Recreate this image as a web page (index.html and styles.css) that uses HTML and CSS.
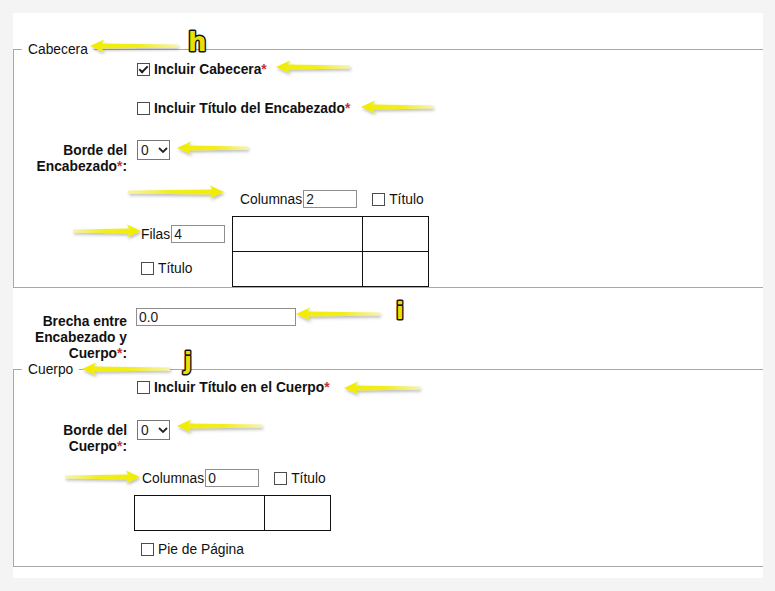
FILE: index.html
```html
<!DOCTYPE html>
<html lang="es">
<head>
    <meta charset="UTF-8">
    <meta name="viewport" content="width=device-width, initial-scale=1.0">
    <title>Diseño de Tabla - Cabecera y Cuerpo</title>
    <link rel="stylesheet" href="styles.css">
</head>
<body>
    <div class="panel">
        <!-- Cabecera -->
        <fieldset class="group">
            <legend>Cabecera</legend>

            <div class="row row-check head-include">
                <span class="field-label"></span>
                <label class="check strong"><input type="checkbox" checked><span>Incluir Cabecera<span class="req">*</span></span></label>
            </div>

            <div class="row row-check head-title">
                <span class="field-label"></span>
                <label class="check strong"><input type="checkbox"><span>Incluir Título del Encabezado<span class="req">*</span></span></label>
            </div>

            <div class="row row-select head-border">
                <span class="field-label">Borde del Encabezado<span class="req">*</span>:</span>
                <span class="select-box">
                    <select><option>0</option><option>1</option><option>2</option></select>
                    <svg viewBox="0 0 10 6"><path d="M1 1 L5 5 L9 1" fill="none" stroke="#222" stroke-width="1.8"/></svg>
                </span>
            </div>

            <div class="layout-head">
                <span></span>
                <div class="cols-line head-cols">
                    <span>Columnas</span><input class="num-input" type="text" value="2">
                    <label class="check title-check"><input type="checkbox"><span>Título</span></label>
                </div>

                <div class="rows-stack">
                    <div class="rows-line"><span>Filas</span><input class="num-input" type="text" value="4"></div>
                    <label class="check rows-title"><input type="checkbox"><span>Título</span></label>
                </div>
                <div class="preview preview-head">
                    <span></span><span></span>
                    <span></span><span></span>
                </div>
            </div>
        </fieldset>

        <div class="row gap-row">
            <span class="field-label">Brecha entre Encabezado y Cuerpo<span class="req">*</span>:</span>
            <input class="gap-input" type="text" value="0.0">
        </div>

        <!-- Cuerpo -->
        <fieldset class="group group-body">
            <legend>Cuerpo</legend>

            <div class="row row-check body-title">
                <span class="field-label"></span>
                <label class="check strong"><input type="checkbox"><span>Incluir Título en el Cuerpo<span class="req">*</span></span></label>
            </div>

            <div class="row row-select body-border">
                <span class="field-label">Borde del Cuerpo<span class="req">*</span>:</span>
                <span class="select-box">
                    <select><option>0</option><option>1</option><option>2</option></select>
                    <svg viewBox="0 0 10 6"><path d="M1 1 L5 5 L9 1" fill="none" stroke="#222" stroke-width="1.8"/></svg>
                </span>
            </div>

            <div class="cols-line body-cols">
                <span>Columnas</span><input class="num-input" type="text" value="0">
                <label class="check title-check"><input type="checkbox"><span>Título</span></label>
            </div>

            <div class="preview preview-body">
                <span></span><span></span>
            </div>

            <label class="check footer-check"><input type="checkbox"><span>Pie de Página</span></label>
        </fieldset>
    </div>

    <!-- flechas y letras de referencia -->
    <svg class="marks" viewBox="0 0 775 591" width="775" height="591">
        <defs>
            <linearGradient id="fade-left" x1="0" y1="0" x2="1" y2="0">
                <stop offset="0" stop-color="#f1ec00"/>
                <stop offset="0.55" stop-color="#f2ee1c"/>
                <stop offset="1" stop-color="#f6f4a8"/>
            </linearGradient>
            <linearGradient id="fade-right" x1="1" y1="0" x2="0" y2="0">
                <stop offset="0" stop-color="#f1ec00"/>
                <stop offset="0.55" stop-color="#f2ee1c"/>
                <stop offset="1" stop-color="#f6f4a8"/>
            </linearGradient>
            <filter id="soft" x="-10%" y="-60%" width="130%" height="250%">
                <feDropShadow dx="1" dy="2" stdDeviation="1.4" flood-color="#555" flood-opacity="0.4"/>
            </filter>
        </defs>
        <g class="arrows-left" fill="url(#fade-left)" filter="url(#soft)">
            <path d="M90 46 l14 -6.5 l-2 4 l76 1 l0 3 l-76 1 l2 4 z"/>
            <path d="M276 67 l14 -6.5 l-2 4 l62 1 l0 3 l-62 1 l2 4 z"/>
            <path d="M361 107 l14 -6.5 l-2 4 l60 1 l0 3 l-60 1 l2 4 z"/>
            <path d="M177 148 l14 -6.5 l-2 4 l59 1 l0 3 l-59 1 l2 4 z"/>
            <path d="M296 314 l14 -6.5 l-2 4 l72 1 l0 3 l-72 1 l2 4 z"/>
            <path d="M82 369 l14 -6.5 l-2 4 l76 1 l0 3 l-76 1 l2 4 z"/>
            <path d="M344 388 l14 -6.5 l-2 4 l64 1 l0 3 l-64 1 l2 4 z"/>
            <path d="M177 426 l14 -6.5 l-2 4 l73 1 l0 3 l-73 1 l2 4 z"/>
        </g>
        <g class="arrows-right" fill="url(#fade-right)" filter="url(#soft)">
            <path d="M224 192 l-14 -6.5 l2 4 l-84 1 l0 3 l84 1 l-2 4 z"/>
            <path d="M141 231 l-14 -6.5 l2 4 l-56 1 l0 3 l56 1 l-2 4 z"/>
            <path d="M140 477 l-14 -6.5 l2 4 l-63 1 l0 3 l63 1 l-2 4 z"/>
        </g>
        <text class="tag" x="188" y="51">h</text>
        <text class="tag tag-small" x="396" y="319">i</text>
        <text class="tag tag-small" x="184" y="369">j</text>
    </svg>
</body>
</html>
```

FILE: styles.css
```css
body {
    margin: 0;
    position: relative;
    min-height: 591px;
    background: #f4f4f4;
    font-family: "Liberation Sans", Arial, sans-serif;
    font-size: 13.8px;
    color: #111;
}
.panel {
    margin: 13px 0 0 13px;
    width: 750px;
    box-sizing: border-box;
    padding: 29px 0 11px 0;
    background: #fff;
}

/* fieldsets */
.group {
    margin: 0;
    padding: 0;
    min-width: 0;
    border: 1px solid #a8a8a8;
    border-right: none;
}
.group legend {
    margin-left: 8px;
    padding: 0 6px;
    line-height: 15px;
}
.group-body {
    padding-bottom: 7px;
}

/* filas del formulario */
.row {
    display: flex;
    align-items: flex-start;
}
.field-label {
    flex: none;
    width: 113px;
    margin-right: 10px;
    text-align: right;
    font-weight: bold;
    line-height: 16px;
}
.row-check {
    height: 19px;
    align-items: center;
}
.row-select {
    height: 35px;
}
.row-select .field-label {
    padding-top: 3px;
}
.head-include { margin-top: 3px; }
.head-title { margin-top: 20px; }
.head-border { margin-top: 22px; }
.body-title { margin-top: 1px; }
.body-border { margin-top: 23px; }

.req {
    color: #c8322e;
    font-weight: bold;
}

/* casillas */
.check {
    display: inline-flex;
    align-items: center;
    line-height: 15px;
    white-space: nowrap;
}
.check.strong {
    font-weight: bold;
}
.check input {
    appearance: none;
    -webkit-appearance: none;
    flex: none;
    position: relative;
    width: 13px;
    height: 13px;
    margin: 0 4px 0 0;
    border: 1px solid #4c4c4c;
    background: #fff;
}
.check input:checked::after {
    content: "";
    position: absolute;
    left: 3px;
    top: 0;
    width: 3px;
    height: 7px;
    border: solid #1e1e1e;
    border-width: 0 2px 2px 0;
    transform: rotate(45deg);
}

/* select */
.select-box {
    display: inline-flex;
    align-items: center;
    width: 33px;
    height: 20px;
    box-sizing: border-box;
    border: 1px solid #777;
}
.select-box select {
    appearance: none;
    -webkit-appearance: none;
    width: 18px;
    height: 18px;
    margin: 0;
    padding: 0 0 0 3px;
    border: 0;
    background: transparent;
    font: inherit;
    color: #222;
    outline: none;
}
.select-box svg {
    width: 10px;
    height: 6px;
    margin-left: 2px;
}

/* campos de texto */
.num-input,
.gap-input {
    height: 18px;
    box-sizing: border-box;
    border: 1px solid #8e8e8e;
    padding: 0 2px;
    font: inherit;
    color: #1c1c1c;
}
.num-input {
    width: 54px;
    margin-left: 1px;
}
.gap-input {
    width: 160px;
    margin: 0;
}

/* columnas / filas */
.layout-head {
    display: grid;
    grid-template-columns: 84px auto;
    justify-content: start;
    column-gap: 7px;
    row-gap: 8px;
    margin: 15px 0 0 127px;
}
.cols-line {
    display: flex;
    align-items: center;
    height: 18px;
}
.head-cols {
    padding-left: 8px;
}
.title-check {
    margin-left: 15px;
}
.rows-line {
    display: flex;
    align-items: center;
    height: 18px;
    margin-top: 9px;
}
.rows-title {
    height: 19px;
    margin-top: 16px;
}

.preview {
    display: grid;
    grid-template-columns: 130px 65px;
    width: max-content;
    border: 1px solid #111;
}
.preview span {
    height: 34px;
}
.preview span:nth-child(odd) {
    border-right: 1px solid #111;
}
.preview-head span:nth-child(-n+2) {
    border-bottom: 1px solid #111;
}

/* brecha */
.gap-row {
    margin-top: 20px;
    height: 54px;
}
.gap-row .field-label {
    width: 114px;
    margin-right: 9px;
    padding-top: 6px;
}

/* cuerpo */
.body-cols {
    margin: 14px 0 0 128px;
}
.preview-body {
    margin: 8px 0 0 120px;
}
.footer-check {
    height: 19px;
    margin: 9px 0 0 127px;
}

/* anotaciones */
.marks {
    position: absolute;
    left: 0;
    top: 0;
    pointer-events: none;
}
.tag {
    font-family: "DejaVu Sans", sans-serif;
    font-weight: bold;
    font-size: 26px;
    fill: #e9e100;
    stroke: #141414;
    stroke-width: 3px;
    stroke-linejoin: round;
    paint-order: stroke;
}
.tag-small {
    font-size: 23px;
}
```
